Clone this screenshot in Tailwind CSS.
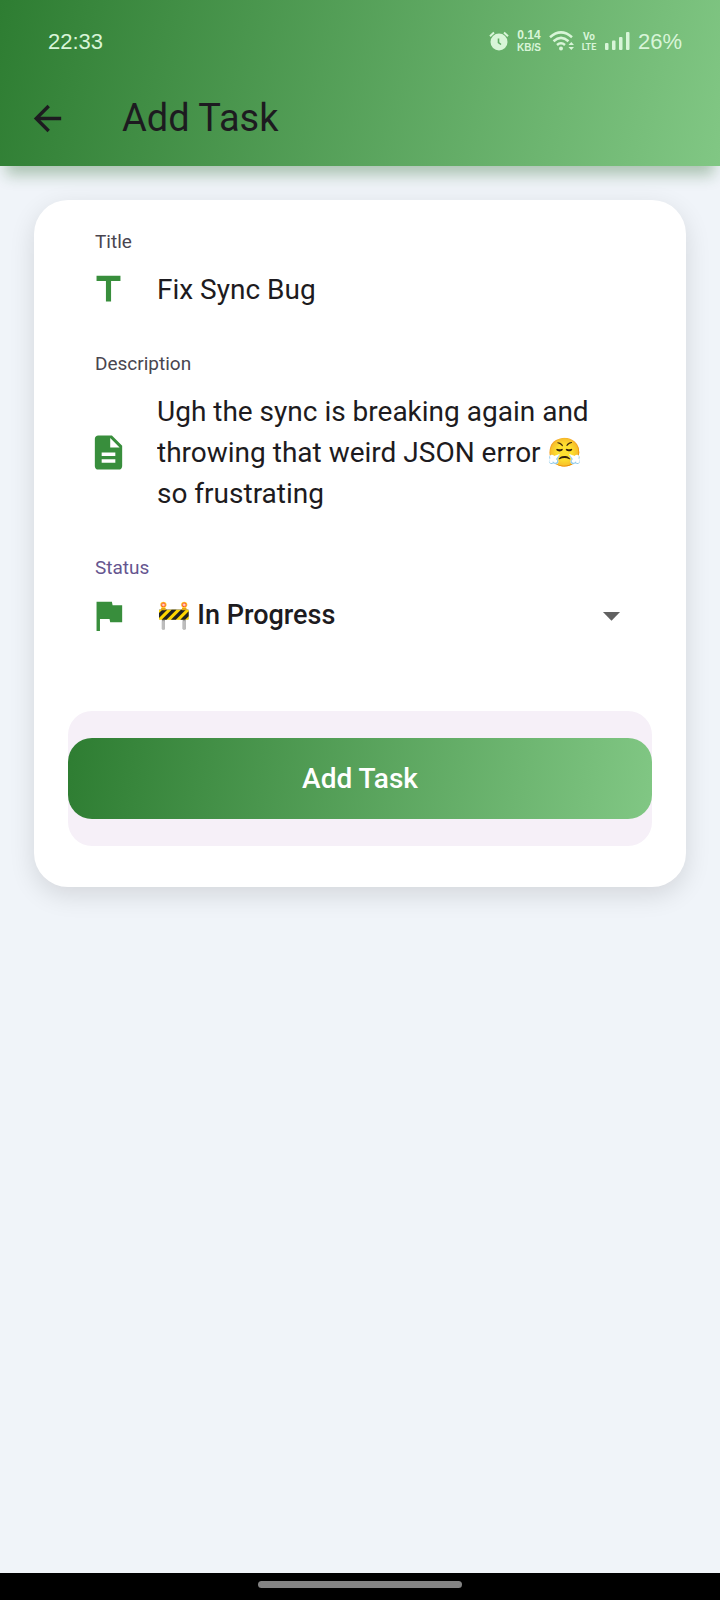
<!DOCTYPE html>
<html lang="en">
<head>
<meta charset="utf-8">
<meta name="viewport" content="width=device-width, initial-scale=1">
<title>Add Task</title>
<script src="https://cdn.jsdelivr.net/npm/@tailwindcss/browser@4"></script>
</head>
<body class="flex min-h-screen flex-col bg-[#f0f4f9] font-[Roboto,'Noto_Color_Emoji',sans-serif] text-[#1d1b20]">
  <header class="bg-[linear-gradient(103deg,#2e7d32,#81c784)] pb-3 shadow-[0_15px_14px_-6px_rgba(27,94,32,0.32)]">
    <div class="flex h-[82px] items-center justify-between pr-[38px] pl-12 font-['Liberation_Sans',sans-serif] text-[22px] text-[#d8f5d8]">
      <time>22:33</time>
      <div class="flex items-center">
        <svg class="mr-2 h-5 w-5" viewBox="0 0 20 20" fill="none" stroke="currentColor" aria-label="Alarm">
          <circle cx="10" cy="11" r="8.5" fill="currentColor" stroke="none"/>
          <path d="M1 5.200 5 1.500M19 5.200 15 1.500" stroke-width="2"/>
          <path d="M9.500 7.500v4l2.500 2" stroke="#60ad64" stroke-width="1.600"/>
        </svg>
        <div class="mr-2 w-6 text-center font-bold">
          <div class="text-[12px] leading-[13px]">0.14</div>
          <div class="text-[10px] leading-[11px]">KB/S</div>
        </div>
        <svg class="mr-1.5 h-5 w-[26px]" viewBox="0 0 26 20" fill="none" stroke="currentColor" aria-label="Wi-Fi">
          <path d="M1 6.200Q12 -3.500 23 6.200M4.500 10.200Q12 3.500 19.500 10.200M8 14Q12 10.500 16 14" stroke-width="2.500"/>
          <circle cx="12" cy="17.500" r="2" fill="currentColor" stroke="none"/>
          <path d="M19.500 14 22.300 11 25 14zM19.500 16 22.300 19 25 16z" fill="currentColor" stroke="none"/>
        </svg>
        <div class="mr-2 w-4 text-center font-[Roboto,sans-serif] font-bold">
          <div class="text-[10px] leading-[11px]">Vo</div>
          <div class="text-[9px] leading-[10px]">LTE</div>
        </div>
        <svg class="mr-2 h-[18px] w-[25px]" viewBox="0 0 25 18" fill="currentColor" aria-label="Signal">
          <rect x="0" y="11" width="3.500" height="7" rx="1"/><rect x="7" y="8.500" width="3.500" height="9.500" rx="1"/><rect x="14" y="5" width="3.500" height="13" rx="1"/><rect x="21" y="0" width="3.500" height="18" rx="1"/>
        </svg>
        <span>26%</span>
      </div>
    </div>
    <div class="flex h-[72px] items-center gap-[54px] pl-[27px]">
      <button type="button" aria-label="Back" class="h-[41px] w-[41px] shrink-0">
        <svg class="h-[41px] w-[41px]" viewBox="0 0 24 24" fill="currentColor"><path d="M20 11H7.830l5.590-5.590L12 4l-8 8 8 8 1.410-1.410L7.830 13H20v-2z"/></svg>
      </button>
      <h1 class="text-[38px] leading-[48px]">Add Task</h1>
    </div>
  </header>

  <main class="flex-1 px-[34px] pt-[34px]">
    <form class="rounded-[34px] bg-white px-[34px] pt-[30px] pb-[41px] shadow-[0_8px_26px_rgba(0,0,0,0.12)]">
      <div class="flex flex-col gap-[42px] px-5">
        <div>
          <label for="title" class="ml-[7px] block text-[19px] leading-6 text-[#49454f]">Title</label>
          <div class="mt-[15px] flex items-center gap-7">
            <svg class="h-[41px] w-[41px] shrink-0 text-[#388e3c]" viewBox="0 0 24 24" fill="currentColor"><path d="M5 4v3h5.500v12h3V7H19V4z"/></svg>
            <input id="title" type="text" value="Fix Sync Bug" class="h-[41px] w-full min-w-0 bg-transparent text-[28px] leading-[41px] outline-none">
          </div>
        </div>
        <div>
          <label for="description" class="ml-[7px] block text-[19px] leading-6 text-[#49454f]">Description</label>
          <div class="mt-[15px] flex items-center gap-7">
            <svg class="h-[41px] w-[41px] shrink-0 text-[#388e3c]" viewBox="0 0 24 24" fill="currentColor"><path d="M14 2H6c-1.100 0-1.990.9-1.990 2L4 20c0 1.100.89 2 1.990 2H18c1.100 0 2-.9 2-2V8l-6-6zm2 16H8v-2h8v2zm0-4H8v-2h8v2zm-3-5V3.500L18.500 9H13z"/></svg>
            <textarea id="description" rows="3" class="block w-full min-w-0 resize-none overflow-hidden bg-transparent text-[28px] leading-[41px] outline-none">Ugh the sync is breaking again and
throwing that weird JSON error 😤
so frustrating</textarea>
          </div>
        </div>
        <div>
          <label for="status" class="ml-[7px] block text-[19px] leading-6 text-[#65558f]">Status</label>
          <div class="mt-[15px] flex items-center gap-7">
            <svg class="h-[41px] w-[41px] shrink-0 text-[#388e3c]" viewBox="0 0 24 24" fill="currentColor"><path d="M14.400 6L14 4H5v17h2v-7h5.600l.4 2h7V6z"/></svg>
            <div class="grid min-w-0 flex-1 items-center">
              <select id="status" class="col-start-1 row-start-1 h-[41px] w-full appearance-none bg-transparent text-[27px] leading-[41px] font-medium outline-none">
                <option>🚧 In Progress</option>
              </select>
              <svg class="pointer-events-none col-start-1 row-start-1 h-[41px] w-[41px] justify-self-end text-[#616161]" viewBox="0 0 24 24" fill="currentColor"><path d="M7 10l5 5 5-5z"/></svg>
            </div>
          </div>
        </div>
      </div>
      <div class="mt-[75px] rounded-3xl bg-[#f6f0f8] py-[27px]">
        <button type="submit" class="block h-[81px] w-full rounded-3xl bg-[linear-gradient(98deg,#2e7d32,#81c784)] text-[28px] font-medium text-white">Add Task</button>
      </div>
    </form>
  </main>

  <footer class="flex h-[27px] justify-center bg-black pt-2">
    <div class="h-[7px] w-[204px] rounded-full bg-[#838383]"></div>
  </footer>
</body>
</html>
